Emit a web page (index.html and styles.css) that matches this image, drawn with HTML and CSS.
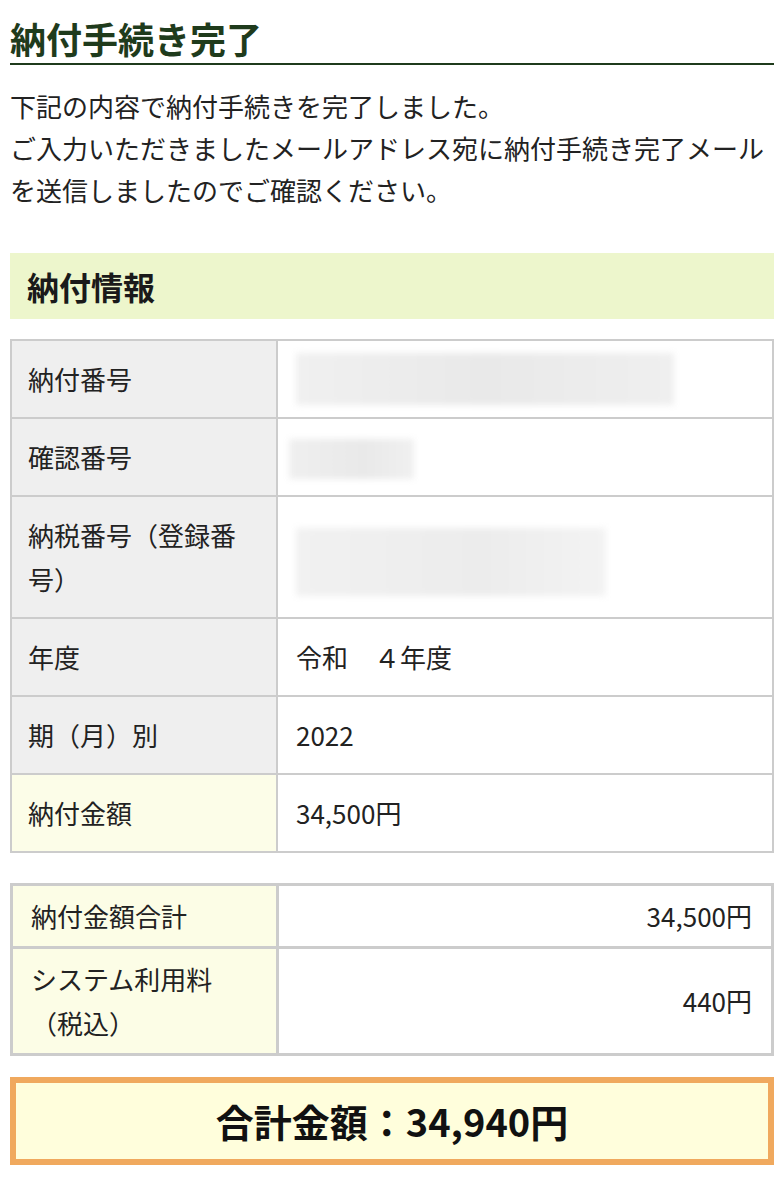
FILE: index.html
```html
<!DOCTYPE html>
<html lang="ja">
<head>
<meta charset="utf-8">
<title>納付手続き完了</title>
<link rel="stylesheet" href="styles.css">
</head>
<body>
<main class="page">
  <h1 class="title">納付手続き完了</h1>
  <p class="lead">下記の内容で納付手続きを完了しました。<br>ご入力いただきましたメールアドレス宛に納付手続き完了メールを送信しましたのでご確認ください。</p>

  <h2 class="section">納付情報</h2>

  <div class="kv">
    <div class="kv-label">納付番号</div>
    <div class="kv-value"><span class="mask mask-1"></span></div>

    <div class="kv-label">確認番号</div>
    <div class="kv-value"><span class="mask mask-2"></span></div>

    <div class="kv-label">納税番号（登録番号）</div>
    <div class="kv-value"><span class="mask mask-3"></span></div>

    <div class="kv-label">年度</div>
    <div class="kv-value">令和　４年度</div>

    <div class="kv-label">期（月）別</div>
    <div class="kv-value">2022</div>

    <div class="kv-label kv-label-hl">納付金額</div>
    <div class="kv-value">34,500円</div>
  </div>

  <div class="sum">
    <div class="sum-label">納付金額合計</div>
    <div class="sum-value">34,500円</div>

    <div class="sum-label">システム利用料（税込）</div>
    <div class="sum-value">440円</div>
  </div>

  <div class="total">合計金額：34,940円</div>
</main>
</body>
</html>
```

FILE: styles.css
```css
* {
  box-sizing: border-box;
}

html, body {
  margin: 0;
  padding: 0;
  background: #ffffff;
}

body {
  font-family: "Noto Sans CJK JP", "Noto Sans", sans-serif;
  color: #222222;
  font-size: 26px;
}

.page {
  padding: 0 10px 40px;
}

.title {
  margin: 0;
  padding-top: 16px;
  padding-bottom: 3px;
  font-size: 36px;
  line-height: 44px;
  font-weight: 700;
  color: #1f3b1c;
  border-bottom: 2px solid #1f3b1c;
}

.lead {
  margin: 20px 0 0;
  font-size: 26px;
  line-height: 42px;
}

.section {
  margin: 42px 0 0;
  padding-left: 17px;
  height: 66px;
  line-height: 66px;
  font-size: 32px;
  font-weight: 700;
  color: #1a1a1a;
  background: #edf6cc;
}

.kv {
  margin-top: 20px;
  display: grid;
  grid-template-columns: 264px 1fr;
  gap: 2px;
  background: #cccccc;
  border: 2px solid #cccccc;
}

.kv-label {
  background: #efefef;
  padding: 16px 16px 16px 16px;
  line-height: 44px;
}

.kv-label-hl {
  background: #fcfde8;
}

.kv-value {
  background: #ffffff;
  padding: 16px 17px 16px 18px;
  line-height: 44px;
  display: flex;
  align-items: center;
}

.mask {
  display: block;
  background: #ececec;
  filter: blur(3px);
}

.mask-1 {
  width: 378px;
  height: 52px;
  margin: -4px 0;
  background: linear-gradient(90deg, #f0f0f0 0%, #e9e9e9 50%, #efefef 100%);
}

.mask-2 {
  width: 125px;
  height: 40px;
  margin: 4px 0 0 -7px;
  background: linear-gradient(90deg, #efefef 0%, #e9e9e9 60%, #f0f0f0 100%);
}

.mask-3 {
  width: 310px;
  height: 68px;
  margin-top: 10px;
  background: linear-gradient(90deg, #f1f1f1 0%, #ececec 60%, #f3f3f3 100%);
}

.sum {
  margin-top: 30px;
  display: grid;
  grid-template-columns: 263px 1fr;
  gap: 3px;
  background: #cccccc;
  border: 3px solid #cccccc;
}

.sum-label {
  background: #fcfde6;
  padding: 8px 16px 8px 18px;
  line-height: 44px;
}

.sum-value {
  background: #ffffff;
  padding: 8px 19px 8px 18px;
  line-height: 44px;
  display: flex;
  align-items: center;
  justify-content: flex-end;
}

.total {
  margin-top: 21px;
  border: 6px solid #f0a95e;
  background: #fffedc;
  height: 88px;
  line-height: 76px;
  text-align: center;
  font-size: 38px;
  font-weight: 700;
  color: #111111;
}
```
